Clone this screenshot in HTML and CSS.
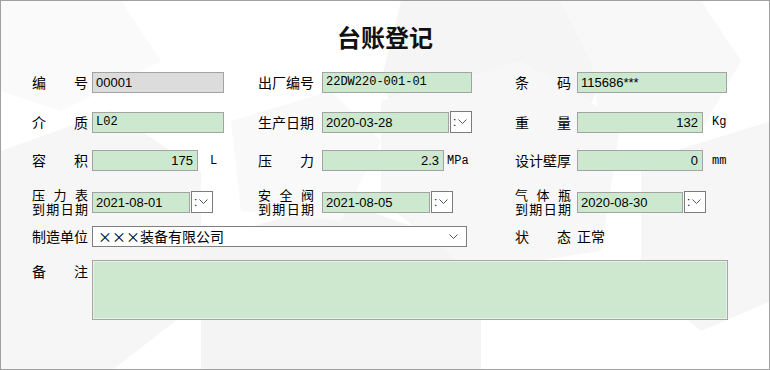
FILE: index.html
```html
<!DOCTYPE html>
<html lang="zh-CN">
<head>
    <meta charset="UTF-8">
    <title>台账登记</title>
    <link rel="stylesheet" href="styles.css">
</head>
<body>
    <div class="window">
        <!-- 背景多边形 -->
        <svg class="bg" width="770" height="370" viewBox="0 0 770 370">
            <polygon points="400,0 560,0 600,80 560,170 420,170 380,80" fill="#f5f5f5"/>
            <polygon points="560,0 700,0 740,60 700,130 600,130 590,60" fill="#f8f8f8"/>
            <polygon points="0,150 110,110 200,170 200,300 110,370 0,370" fill="#f6f6f6"/>
            <polygon points="200,240 340,200 480,250 480,370 200,370" fill="#f4f4f4"/>
            <polygon points="380,100 520,60 620,120 600,250 470,270 380,200" fill="#f7f7f7"/>
            <polygon points="640,160 770,120 770,300 700,330 640,280" fill="#f6f6f6"/>
            <polygon points="0,0 120,0 160,60 60,110 0,90" fill="#fafafa"/>
            <polygon points="230,120 330,90 380,140 340,220 240,210" fill="#f9f9f9"/>
        </svg>

        <h1 class="title">台账登记</h1>

        <div class="form">
            <div class="row row-1">
                <span class="lbl">编 号</span>
                <div class="fld"><div class="inp gray w-132">00001</div></div>
                <span class="lbl">出厂编号</span>
                <div class="fld"><div class="inp song w-150">22DW220-001-01</div></div>
                <span class="lbl">条 码</span>
                <div class="fld"><div class="inp w-150">115686***</div></div>
            </div>

            <div class="row row-2">
                <span class="lbl">介 质</span>
                <div class="fld"><div class="inp song w-132">L02</div></div>
                <span class="lbl">生产日期</span>
                <div class="fld">
                    <div class="inp w-127">2020-03-28</div>
                    <div class="pick"><span class="dot">:</span><svg width="9" height="6" viewBox="0 0 9 6"><polyline points="0.5,0.5 4.5,4.5 8.5,0.5" fill="none" stroke="#555" stroke-width="1"/></svg></div>
                </div>
                <span class="lbl">重 量</span>
                <div class="fld"><div class="inp num w-126">132</div><span class="unit u-kg">Kg</span></div>
            </div>

            <div class="row row-3">
                <span class="lbl">容 积</span>
                <div class="fld"><div class="inp num w-106">175</div><span class="unit u-l">L</span></div>
                <span class="lbl">压 力</span>
                <div class="fld"><div class="inp num w-122">2.3</div><span class="unit u-mpa">MPa</span></div>
                <span class="lbl">设计壁厚</span>
                <div class="fld"><div class="inp num w-126">0</div><span class="unit u-kg">mm</span></div>
            </div>

            <div class="row row-4">
                <span class="lbl two"><span>压 力 表</span><span>到期日期</span></span>
                <div class="fld">
                    <div class="inp w-98">2021-08-01</div>
                    <div class="pick"><span class="dot">:</span><svg width="9" height="6" viewBox="0 0 9 6"><polyline points="0.5,0.5 4.5,4.5 8.5,0.5" fill="none" stroke="#555" stroke-width="1"/></svg></div>
                </div>
                <span class="lbl two"><span>安 全 阀</span><span>到期日期</span></span>
                <div class="fld">
                    <div class="inp w-108">2021-08-05</div>
                    <div class="pick"><span class="dot">:</span><svg width="9" height="6" viewBox="0 0 9 6"><polyline points="0.5,0.5 4.5,4.5 8.5,0.5" fill="none" stroke="#555" stroke-width="1"/></svg></div>
                </div>
                <span class="lbl two"><span>气 体 瓶</span><span>到期日期</span></span>
                <div class="fld">
                    <div class="inp w-106">2020-08-30</div>
                    <div class="pick"><span class="dot">:</span><svg width="9" height="6" viewBox="0 0 9 6"><polyline points="0.5,0.5 4.5,4.5 8.5,0.5" fill="none" stroke="#555" stroke-width="1"/></svg></div>
                </div>
            </div>

            <div class="row row-5">
                <span class="lbl">制造单位</span>
                <div class="fld span-3">
                    <div class="combo"><span>×××装备有限公司</span><svg width="9" height="6" viewBox="0 0 9 6"><polyline points="0.5,0.5 4.5,4.5 8.5,0.5" fill="none" stroke="#555" stroke-width="1"/></svg></div>
                </div>
                <span class="lbl">状 态</span>
                <div class="fld"><span class="plain">正常</span></div>
            </div>

            <div class="row row-6">
                <span class="lbl">备 注</span>
                <div class="fld span-5"><div class="memo"></div></div>
            </div>
        </div>
    </div>
</body>
</html>
```

FILE: styles.css
```css
body {
    margin: 0;
    background-color: #fff;
}

.window {
    position: relative;
    width: 770px;
    height: 370px;
    box-sizing: border-box;
    border: 1px solid #a0a0a0;
    background-color: #fff;
    overflow: hidden;
    font-family: "Noto Sans CJK SC", sans-serif;
    font-size: 14px;
    color: #000;
}

.bg {
    position: absolute;
    left: 0;
    top: 0;
}

.title {
    position: relative;
    margin: 0;
    padding-top: 22px;
    text-align: center;
    font-size: 24px;
    line-height: 28px;
    font-weight: bold;
    color: #111;
}

.form {
    position: relative;
    padding-left: 31px;
}

.row {
    display: grid;
    grid-template-columns: 60px 166px 64px 193px 62px 1fr;
    align-items: center;
    height: 21px;
}

.row-1 { margin-top: 21px; }
.row-2 { margin-top: 18px; }
.row-3 { margin-top: 18px; }
.row-4 { margin-top: 17px; height: 22px; }
.row-5 { margin-top: 16px; height: 21px; }
.row-6 { margin-top: 13px; height: 60px; align-items: start; }

.lbl {
    display: block;
    width: 56px;
    line-height: 21px;
    text-align: justify;
    text-align-last: justify;
    white-space: nowrap;
}

.lbl.two {
    display: flex;
    flex-direction: column;
    font-size: 13px;
    line-height: 14px;
}

.lbl.two span {
    display: block;
    text-align-last: justify;
}

.row-6 .lbl {
    margin-top: 1px;
}

.fld {
    display: flex;
    align-items: center;
}

.span-3 { grid-column: span 3; }
.span-5 { grid-column: span 5; }

.inp {
    height: 21px;
    box-sizing: border-box;
    border: 1px solid #a3a3a3;
    background-color: #cce8cf;
    padding: 0 3px;
    font-family: "Liberation Sans", Arial, sans-serif;
    font-size: 13px;
    line-height: 19px;
    white-space: nowrap;
    overflow: hidden;
}

.inp.gray { background-color: #dcdcdc; }
.inp.song { font-family: "Liberation Mono", monospace; font-size: 12px; }
.inp.num { text-align: right; padding-right: 4px; }

.w-98 { width: 98px; }
.w-106 { width: 106px; }
.w-108 { width: 108px; }
.w-122 { width: 122px; }
.w-126 { width: 126px; }
.w-127 { width: 127px; }
.w-132 { width: 132px; }
.w-150 { width: 150px; }

.pick {
    display: flex;
    align-items: center;
    width: 22px;
    height: 22px;
    box-sizing: border-box;
    margin-left: 1px;
    border: 1px solid #7c7c7c;
    background-color: #fff;
    padding-left: 2px;
}

.pick .dot {
    font-family: "Liberation Sans", sans-serif;
    font-size: 12px;
    line-height: 12px;
    margin-right: 2px;
}

.unit {
    font-family: "Liberation Mono", monospace;
    font-size: 12px;
}

.u-kg { margin-left: 9px; }
.u-l { margin-left: 12px; }
.u-mpa { margin-left: 3px; }

.combo {
    display: flex;
    align-items: center;
    justify-content: space-between;
    width: 375px;
    height: 21px;
    box-sizing: border-box;
    border: 1px solid #7f7f7f;
    background-color: #fff;
    padding: 0 8px 0 5px;
    line-height: 19px;
}

.plain {
    line-height: 21px;
}

.memo {
    width: 636px;
    height: 60px;
    box-sizing: border-box;
    border: 1px solid #a6a6a6;
    background-color: #cde8cf;
    box-shadow: inset 0 0 0 1px #e6f2e7;
}
```
